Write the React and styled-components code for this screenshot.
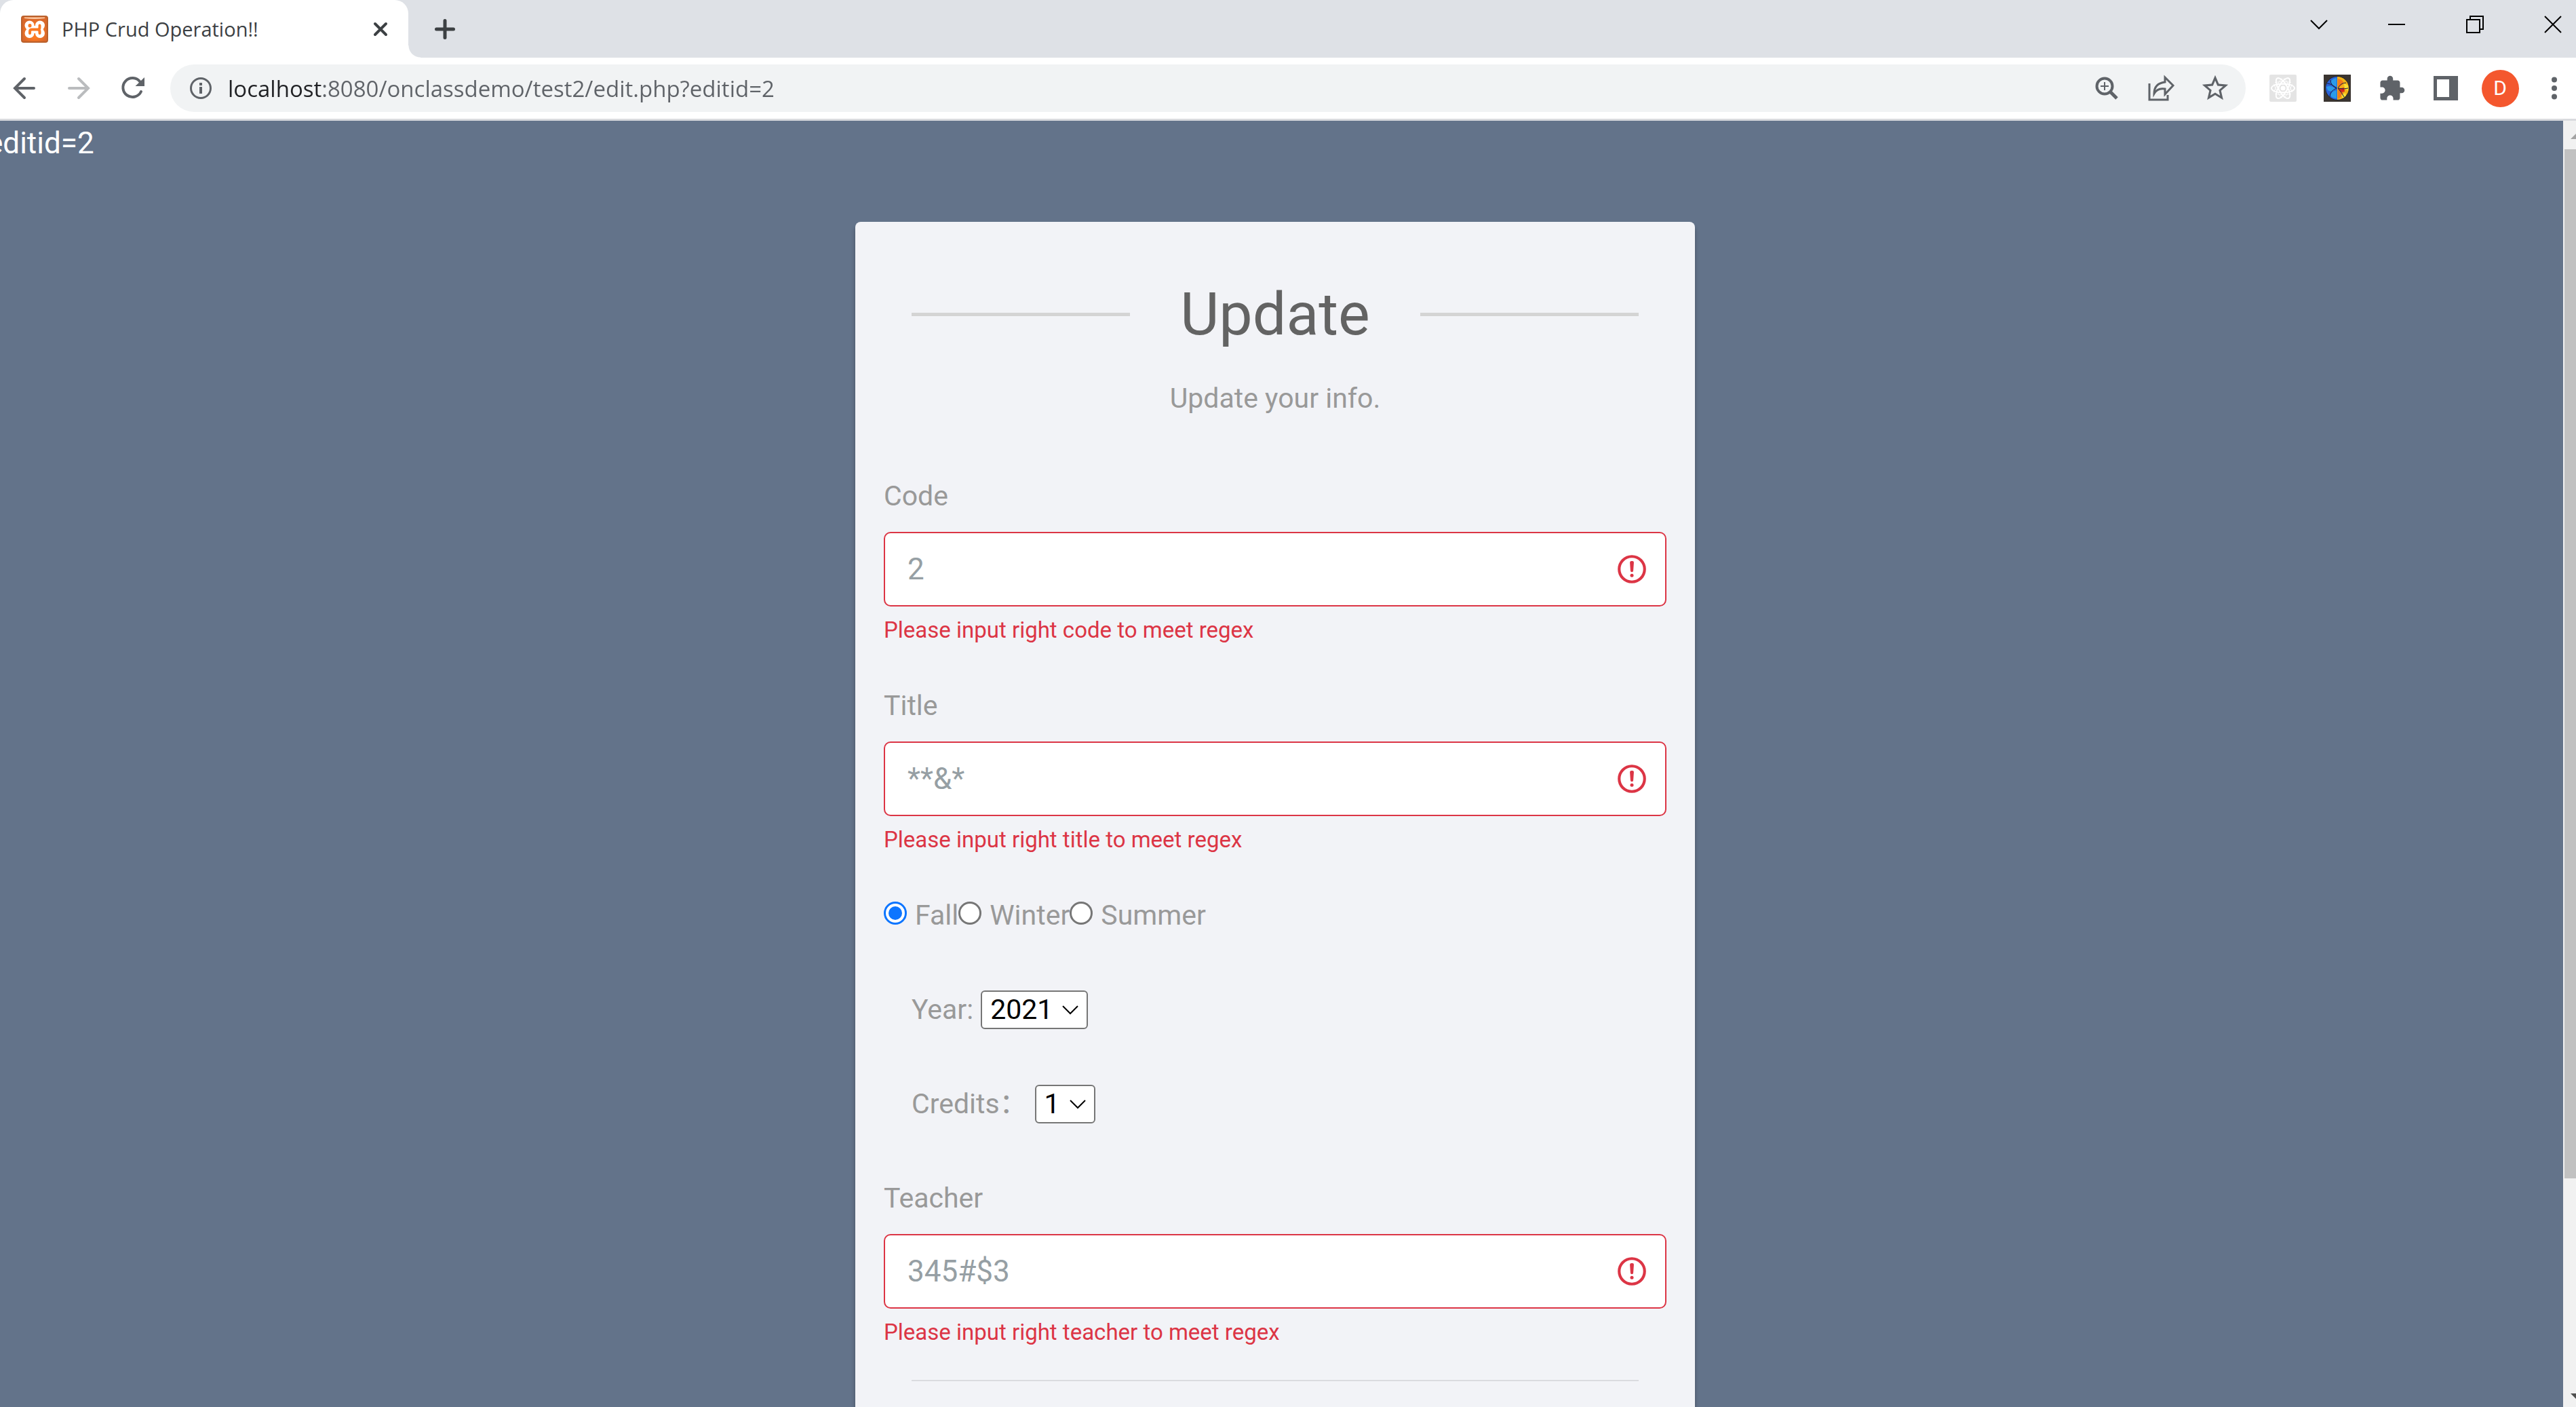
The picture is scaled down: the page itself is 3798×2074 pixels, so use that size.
import React from "react";
import styled, { createGlobalStyle } from "styled-components";

const GlobalStyle = createGlobalStyle`
  *, *::before, *::after { box-sizing: border-box; }
  body { margin: 0; font-family: Roboto, "Noto Sans CJK SC", sans-serif; }
  button, input, select { font: inherit; margin: 0; }
`;

const BrowserWindow = styled.div`
  display: flex;
  flex-direction: column;
  height: 100vh;
  overflow: hidden;
  background: #fff;
`;

const TabStrip = styled.header`
  display: flex;
  height: 85px;
  background: #dee1e6;
  font-family: "Open Sans", sans-serif;
`;

const Tab = styled.div`
  position: relative;
  display: flex;
  align-items: center;
  width: 602px;
  padding: 0 13px 0 31px;
  border-radius: 20px 20px 0 0;
  background: #fff;

  &::after {
    content: "";
    position: absolute;
    left: 100%;
    bottom: 0;
    width: 18px;
    height: 18px;
    background: radial-gradient(circle at 100% 0, transparent 17px, #fff 18px);
  }
`;

const TabTitle = styled.span`
  flex: 1;
  padding-left: 20px;
  font-size: 29px;
  line-height: 40px;
  color: #3c4043;
`;

const IconButton = styled.button`
  display: grid;
  place-items: center;
  flex: none;
  width: 56px;
  height: 56px;
  padding: 0;
  border: 0;
  background: none;
  color: ${(p) => p.$color || "#5f6368"};

  svg { display: block; overflow: visible; }
`;

const NewTab = styled(IconButton)`
  align-self: center;
  margin-left: 26px;
`;

const WindowControls = styled.div`
  display: flex;
  gap: 59px;
  margin-left: auto;
  padding: 8px 6px 0 0;
`;

const Toolbar = styled.nav`
  display: flex;
  align-items: center;
  gap: 27px;
  padding: 10px 4px 10px 8px;
  border-bottom: 3px solid #d9dade;
`;

const ButtonGroup = styled.div`
  display: flex;
  gap: 24px;
`;

const AddressBar = styled.div`
  display: flex;
  flex: 1;
  align-items: center;
  height: 70px;
  padding: 0 17px;
  border-radius: 35px;
  background: #f1f3f4;
`;

const Address = styled.input`
  flex: 1;
  min-width: 0;
  height: 56px;
  margin: 0 12px;
  padding: 0;
  border: 0;
  outline: 0;
  font-family: "Open Sans", sans-serif;
  font-size: 33px;
  color: transparent;
  caret-color: #202124;
  background: linear-gradient(90deg, #202124 139px, #5f6368 139px);
  background-clip: text;
  -webkit-background-clip: text;
`;

const Avatar = styled.span`
  display: grid;
  place-items: center;
  width: 55px;
  height: 55px;
  border-radius: 50%;
  background: #f4572e;
  color: #fff;
  font-size: 30px;
  line-height: 40px;
`;

const Viewport = styled.div`
  display: flex;
  flex: 1;
  min-height: 0;
`;

const Page = styled.main`
  flex: 1;
  min-width: 0;
  margin-left: -19px;
  overflow: hidden;
  background: #63738a;
`;

const DebugText = styled.div`
  font-size: 44px;
  line-height: 66px;
  color: #fff;
`;

const ScrollTrack = styled.div`
  display: flex;
  flex-direction: column;
  align-items: flex-end;
  width: 19px;
  overflow: hidden;
  background: #f1f1f1;

  svg { display: block; flex: none; }
`;

const ScrollThumb = styled.div`
  width: 17px;
  height: 80%;
  margin-bottom: auto;
  background: #c1c1c1;
`;

const Card = styled.form`
  width: 1238px;
  margin: 83px auto;
  padding: 82px 42px;
  border-radius: 8px;
  background: #f2f3f7;
  box-shadow: 0 6px 6px rgba(0, 0, 0, 0.3);
  color: #999;
  font-size: 41px;
  line-height: 62px;
`;

const Heading = styled.h2`
  display: flex;
  align-items: center;
  justify-content: space-between;
  margin: 0 41px 39px;
  color: #636363;
  font-size: 88px;
  font-weight: 400;
  line-height: 108px;

  &::before, &::after {
    content: "";
    width: 30%;
    height: 5px;
    background: #d4d4d4;
  }
`;

const Hint = styled.p`
  margin: 0 0 82px;
  text-align: center;
`;

const Fields = styled.div`
  display: flex;
  flex-direction: column;
  gap: 53px;
`;

const OptionRows = styled.div`
  display: flex;
  flex-direction: column;
  gap: 77px;
  margin-bottom: 24px;
`;

const Field = styled.div`
  display: flex;
  flex-direction: column;
`;

const InputFrame = styled.div`
  position: relative;
  margin-top: 22px;

  svg {
    position: absolute;
    top: 30px;
    right: 26px;
  }
`;

const TextInput = styled.input`
  display: block;
  width: 100%;
  height: 110px;
  padding: 0 100px 0 33px;
  border: 2px solid #dc3545;
  border-radius: 10px;
  outline: 0;
  background: #fff;
  color: #969fa4;
  font-size: 44px;
`;

const ErrorText = styled.div`
  margin-top: 8px;
  color: #dc3545;
  font-size: 33px;
  line-height: 54px;
`;

const RadioRow = styled.div`
  display: flex;
`;

const RadioLabel = styled.label`
  display: flex;
  gap: 12px;
`;

const Radio = styled.input`
  appearance: none;
  display: grid;
  place-items: center;
  width: 34px;
  height: 34px;
  margin: 11px 0 0;
  border: 3px solid #767676;
  border-radius: 50%;
  background: #fff;

  &:checked { border-color: #0d75ff; }
  &:checked::before {
    content: "";
    width: 20px;
    height: 20px;
    border-radius: 50%;
    background: #0d75ff;
  }
`;

const SelectRow = styled.div`
  display: flex;
  align-items: center;
  gap: 11px;
  height: 62px;
  padding-left: 41px;
`;

const SelectFrame = styled.span`
  position: relative;
  display: flex;

  svg {
    position: absolute;
    top: 22px;
    right: 14px;
    pointer-events: none;
  }
`;

const Select = styled.select`
  appearance: none;
  height: 57px;
  padding: 0 49px 0 12px;
  border: 2px solid #767676;
  border-radius: 6px;
  background: #fff;
  color: #000;
  line-height: 53px;
`;

const Divider = styled.hr`
  height: 2px;
  margin: 43px 41px 0;
  border: 0;
  background: #dadbdf;
`;

function Stroke({ size = 34, width = 3, children, ...rest }) {
  return (
    <svg width={size} height={size} viewBox={`0 0 ${size} ${size}`} fill="none" stroke="currentColor" strokeWidth={width} {...rest}>
      {children}
    </svg>
  );
}

function Favicon() {
  return (
    <svg width="40" height="40" viewBox="0 0 40 40">
      <defs>
        <radialGradient id="orange" cy="0.6">
          <stop offset="0.5" stopColor="#fb7a24" />
          <stop offset="1" stopColor="#d9682a" />
        </radialGradient>
      </defs>
      <rect x="1" y="1" width="38" height="38" rx="3" fill="url(#orange)" stroke="#b9602c" strokeWidth="2" />
      <path d="M5 2.500h30v1.500q-15 2-30 0z" fill="#fbc9a4" />
      <g fill="#fff">
        <circle cx="12.500" cy="14.500" r="7" />
        <circle cx="28" cy="14.500" r="7" />
        <circle cx="12.500" cy="26" r="7" />
        <circle cx="28" cy="26" r="7" />
        <path d="M8 15h25v11H8z" />
      </g>
      <g fill="none" stroke="#fb7a24" strokeLinecap="round">
        <path d="M13 14.500v.5" strokeWidth="5" />
        <path d="M27.500 14.500v3q0 3-3 3H16q-3 0-3 3v2.500M24 20.500q3.500 0 3.500 3v2.500" strokeWidth="4" />
      </g>
    </svg>
  );
}

function ReactExtension() {
  return (
    <svg width="40" height="40" viewBox="0 0 40 40">
      <rect width="40" height="40" rx="2" fill="#e4e4e4" />
      <g fill="none" stroke="#fff" strokeWidth="2">
        {[0, 60, 120].map((a) => (
          <g key={a} transform={`rotate(${a} 20 20)`}>
            <ellipse cx="20" cy="20" rx="17" ry="6.500" />
            <path d="M8 11.500q12-3 24 0M8 28.500q12 3 24 0" strokeWidth="0.8" />
          </g>
        ))}
        <circle cx="20" cy="20" r="6" strokeWidth="1" />
      </g>
      <circle cx="20" cy="20" r="3.500" fill="#fff" />
    </svg>
  );
}

function BrainExtension() {
  return (
    <svg width="40" height="40" viewBox="0 0 40 40">
      <rect width="40" height="40" fill="#3a3531" />
      <circle cx="20" cy="20" r="17.500" fill="#17181f" />
      <path d="M20 3a17 17 0 0 0 0 34z" fill="#2b62d8" />
      <path d="M20 3a17 17 0 0 1 0 34z" fill="#f2b416" />
      <path d="M19 5q-7 1-9 6 2 6 9 7zM4 18q7-3 14 3-6 6-12 2zM10 31q0-6 9-8v12q-6 0-9-4z" fill="#2a9bea" />
      <path d="M21 6q6 1 8 5-1 6-8 8zM21 22l8 4q-2 7-8 10z" fill="#f47a1c" />
      <path d="M21 21l9-2 1 6-5 1z" fill="#d8251c" />
      <path d="M30 13l6 3v8l-5-4zM26 30l6-3 1 4-5 4z" fill="#fbe136" />
      <path d="M5 13q6 0 14 7M10 8q0 8 9 12M9 33q0-9 10-13M21 20q4-8 12-8M21 20q9 2 15 0M21 20q6 7 9 13" fill="none" stroke="#1b2347" />
    </svg>
  );
}

function InvalidIcon() {
  return (
    <svg width="50" height="50" viewBox="0 0 12 12" fill="none" stroke="#dc3545">
      <circle cx="6" cy="6" r="4.5" />
      <path strokeLinejoin="round" d="M5.8 3.6h.4L6 6.5z" />
      <circle cx="6" cy="8.2" r=".6" fill="#dc3545" stroke="none" />
    </svg>
  );
}

function ValidatedField({ id, label, value }) {
  return (
    <Field>
      <label htmlFor={id}>{label}</label>
      <InputFrame>
        <TextInput id={id} defaultValue={value} aria-invalid="true" aria-describedby={`${id}-error`} />
        <InvalidIcon />
      </InputFrame>
      <ErrorText id={`${id}-error`}>Please input right {id} to meet regex</ErrorText>
    </Field>
  );
}

function SelectField({ id, label, value }) {
  return (
    <SelectRow>
      <label htmlFor={id}>{label}</label>
      <SelectFrame>
        <Select id={id} defaultValue={value}>
          <option>{value}</option>
        </Select>
        <svg width="24" height="14" viewBox="0 0 24 14" fill="none" stroke="#000" strokeWidth="2">
          <path d="M1 1l11 11L23 1" />
        </svg>
      </SelectFrame>
    </SelectRow>
  );
}

export default function App() {
  return (
    <BrowserWindow>
      <GlobalStyle />
      <TabStrip>
        <Tab>
          <Favicon />
          <TabTitle>PHP Crud Operation!!</TabTitle>
          <IconButton aria-label="Close tab" $color="#3c4043">
            <Stroke size={20} width={4} strokeLinecap="round"><path d="M2 2l16 16M18 2L2 18" /></Stroke>
          </IconButton>
        </Tab>
        <NewTab aria-label="New tab" $color="#3c4043">
          <Stroke size={30} width={5} strokeLinecap="round"><path d="M15 2.500v25M2.500 15h25" /></Stroke>
        </NewTab>
        <WindowControls>
          <IconButton aria-label="Search tabs" $color="#000">
            <Stroke size={26} width={2}><path d="M1 7l12 12L25 7" /></Stroke>
          </IconButton>
          <IconButton aria-label="Minimize" $color="#000">
            <Stroke size={26} width={2}><path d="M0 13h25" /></Stroke>
          </IconButton>
          <IconButton aria-label="Restore" $color="#000">
            <Stroke size={26} width={2}><path d="M1 6h19v19H1zM6 6V1h19v19h-5" /></Stroke>
          </IconButton>
          <IconButton aria-label="Close window" $color="#000">
            <Stroke size={26} width={2}><path d="M1 1l24 24M25 1L1 25" /></Stroke>
          </IconButton>
        </WindowControls>
      </TabStrip>

      <Toolbar>
        <ButtonGroup>
          <IconButton aria-label="Back">
            <Stroke size={32} width={4} strokeLinecap="round"><path d="M30 16H2.500M16 2L2 16l14 14" /></Stroke>
          </IconButton>
          <IconButton aria-label="Forward" $color="#babcbe">
            <Stroke size={32} width={4} strokeLinecap="round"><path d="M2 16h27.500M16 2l14 14-14 14" /></Stroke>
          </IconButton>
          <IconButton aria-label="Reload">
            <Stroke width={4}>
              <path d="M27.500 7.500A14 14 0 1 0 29 22" strokeLinecap="round" />
              <path d="M34 1v13H20.500z" fill="currentColor" stroke="none" />
            </Stroke>
          </IconButton>
        </ButtonGroup>

        <AddressBar>
          <IconButton aria-label="Site information">
            <Stroke size={32} width={3}>
              <circle cx="16" cy="16" r="14.500" />
              <path d="M16 14v10M16 8v4" strokeWidth="4" />
            </Stroke>
          </IconButton>
          <Address aria-label="Address" defaultValue="localhost:8080/onclassdemo/test2/edit.php?editid=2" />
          <ButtonGroup>
            <IconButton aria-label="Zoom">
              <Stroke width={4}>
                <circle cx="14" cy="14" r="11.500" />
                <path d="M22.500 22.500L32 32" strokeWidth="5" />
                <path d="M14 8v12M8 14h12" strokeWidth="2" />
              </Stroke>
            </IconButton>
            <IconButton aria-label="Share">
              <Stroke size={38} width={3}>
                <path d="M2 12v24h27v-7" />
                <path d="M9 27Q9 12 25 10V3l12 12-12 13v-8Q14 18 9 27z" />
              </Stroke>
            </IconButton>
            <IconButton aria-label="Bookmark">
              <svg width="46" height="46" viewBox="0 0 24 24" fill="currentColor">
                <path d="M22 9.240l-7.190-.620L12 2 9.190 8.630 2 9.240l5.460 4.730L5.820 21 12 17.270 18.180 21l-1.630-7.030L22 9.240zM12 15.400l-3.760 2.270 1-4.280-3.320-2.880 4.380-.380L12 6.100l1.710 4.040 4.380.380-3.320 2.880 1 4.280L12 15.400z" />
              </svg>
            </IconButton>
          </ButtonGroup>
        </AddressBar>

        <ButtonGroup>
          <IconButton aria-label="React Developer Tools"><ReactExtension /></IconButton>
          <IconButton aria-label="Brain extension"><BrainExtension /></IconButton>
          <IconButton aria-label="Extensions">
            <svg width="41" height="41" viewBox="0 0 24 24" fill="currentColor">
              <path d="M20.500 11H19V7c0-1.100-.9-2-2-2h-4V3.500C13 2.120 11.880 1 10.500 1S8 2.120 8 3.500V5H4c-1.100 0-1.990.9-1.990 2v3.800H3.500c1.490 0 2.700 1.210 2.700 2.700s-1.210 2.700-2.700 2.700H2V20c0 1.100.9 2 2 2h3.800v-1.500c0-1.490 1.210-2.700 2.700-2.700 1.490 0 2.700 1.210 2.700 2.700V22H17c1.100 0 2-.9 2-2v-4h1.500c1.380 0 2.500-1.120 2.500-2.500S21.880 11 20.500 11z" />
            </svg>
          </IconButton>
          <IconButton aria-label="Side panel">
            <svg width="36" height="36" viewBox="0 0 36 36" fill="currentColor" fillRule="evenodd">
              <path d="M0 0h36v36H0zM5 5v26h18V5z" />
            </svg>
          </IconButton>
          <IconButton aria-label="Profile"><Avatar>D</Avatar></IconButton>
          <IconButton aria-label="Menu">
            <svg width="8" height="34" viewBox="0 0 8 34" fill="currentColor">
              <circle cx="4" cy="4.500" r="4" />
              <circle cx="4" cy="17" r="4" />
              <circle cx="4" cy="29.500" r="4" />
            </svg>
          </IconButton>
        </ButtonGroup>
      </Toolbar>

      <Viewport>
        <Page>
          <DebugText>editid=2</DebugText>
          <Card>
            <Heading>Update</Heading>
            <Hint>Update your info.</Hint>
            <Fields>
              <ValidatedField id="code" label="Code" value="2" />
              <ValidatedField id="title" label="Title" value="**&*" />
              <OptionRows>
                <RadioRow role="radiogroup" aria-label="Term">
                  {["Fall", "Winter", "Summer"].map((term) => (
                    <RadioLabel key={term}>
                      <Radio type="radio" name="term" defaultChecked={term === "Fall"} />
                      {term}
                    </RadioLabel>
                  ))}
                </RadioRow>
                <SelectField id="year" label="Year:" value="2021" />
                <SelectField id="credits" label="Credits：" value="1" />
              </OptionRows>
              <ValidatedField id="teacher" label="Teacher" value="345#$3" />
            </Fields>
            <Divider />
          </Card>
        </Page>
        <ScrollTrack aria-hidden="true">
          <svg width="8" height="42" viewBox="0 0 8 42"><path d="M0 27l10-10v10z" fill="#a3a3a3" /></svg>
          <ScrollThumb />
          <svg width="8" height="42" viewBox="0 0 8 42"><path d="M0 22h10v10z" fill="#505050" /></svg>
        </ScrollTrack>
      </Viewport>
    </BrowserWindow>
  );
}
